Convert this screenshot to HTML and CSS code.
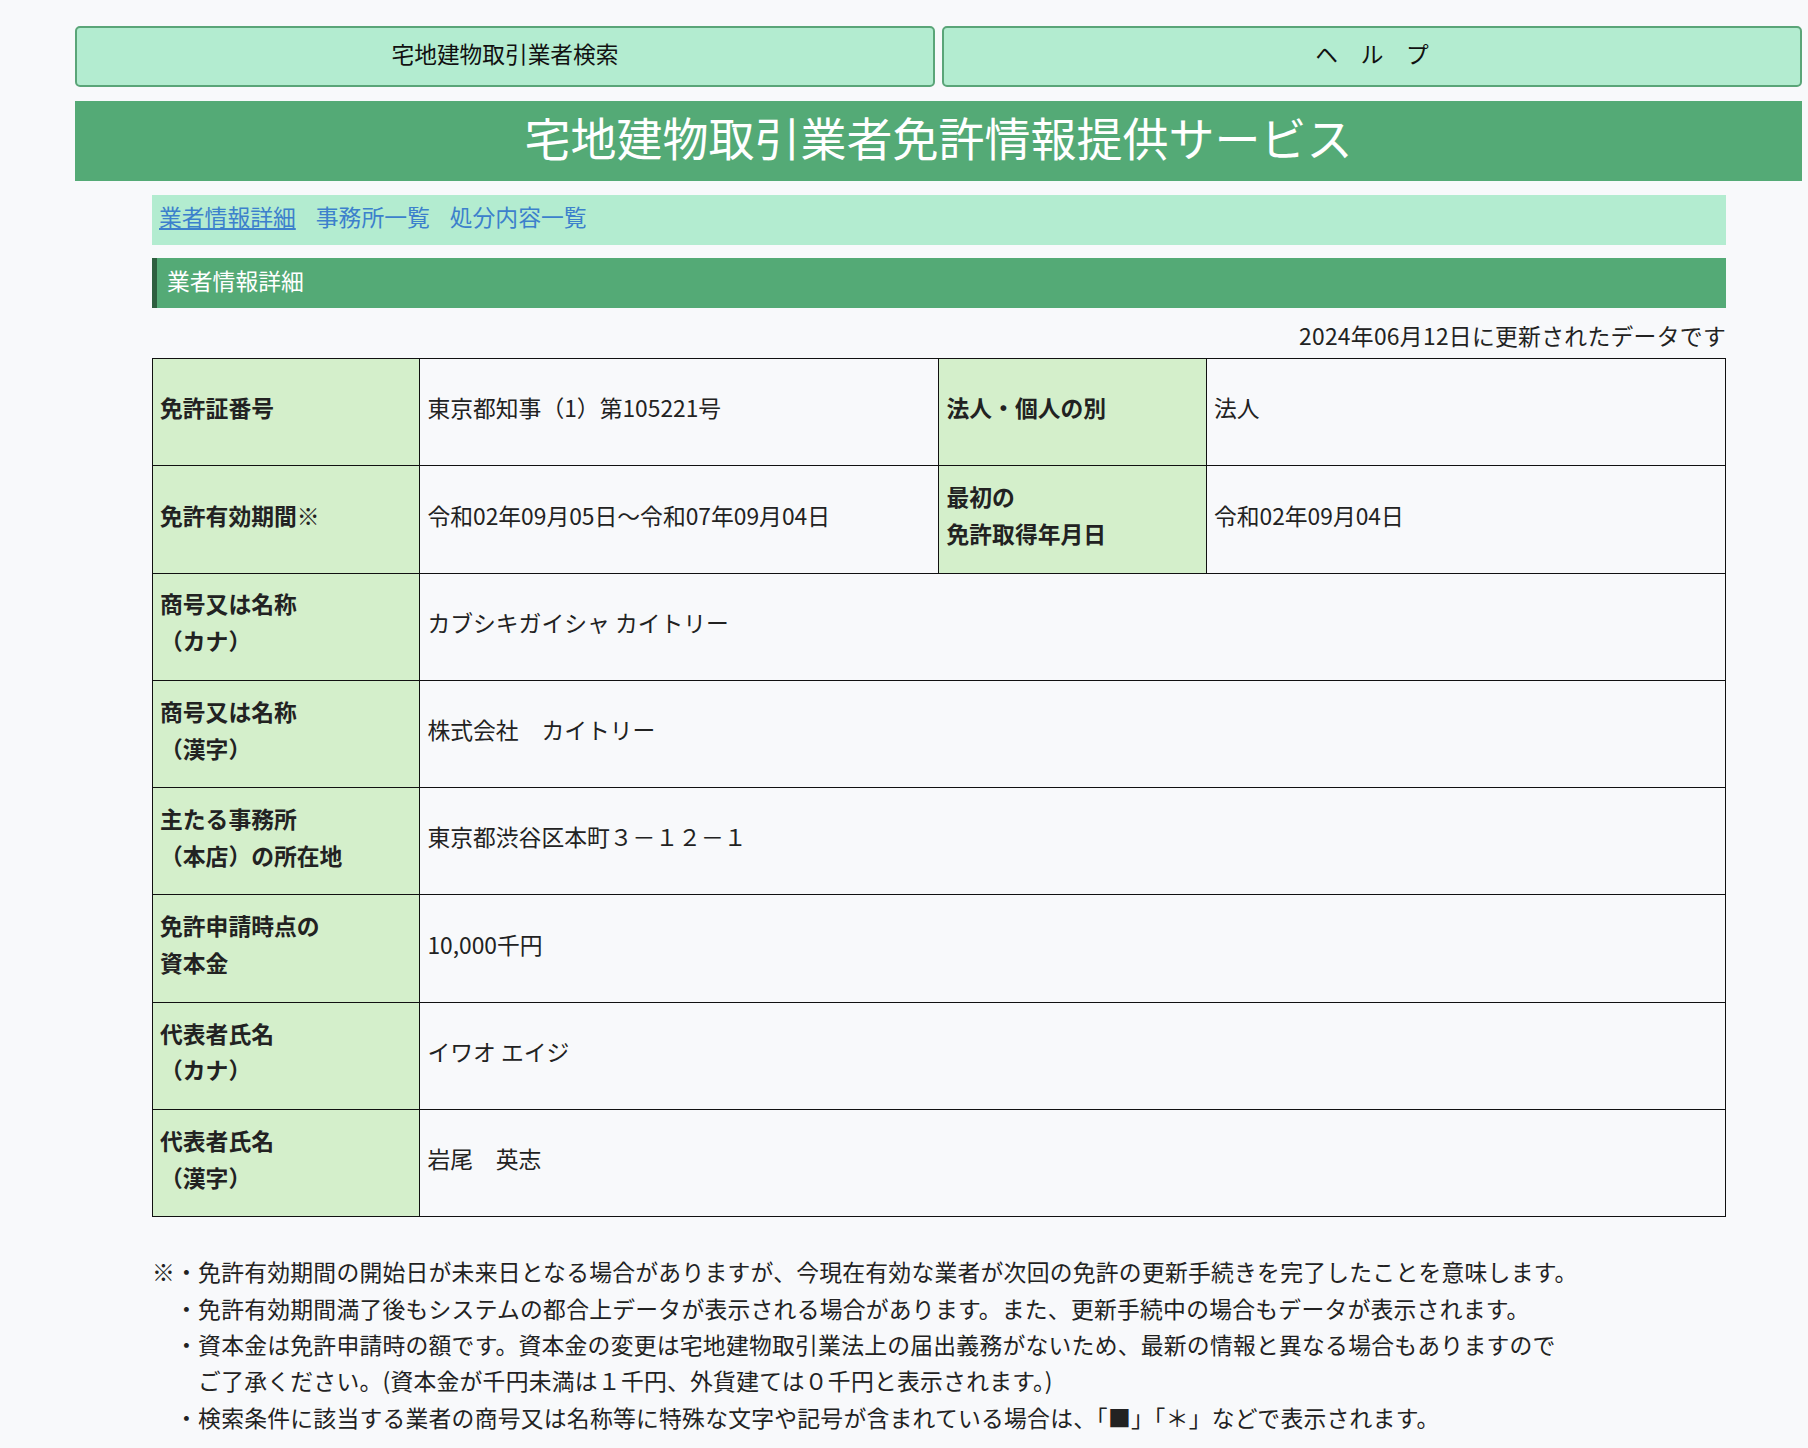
FILE: index.html
```html
<!DOCTYPE html>
<html lang="ja">
<head>
<meta charset="utf-8">
<title>宅地建物取引業者免許情報提供サービス</title>
<link rel="stylesheet" href="styles.css">
</head>
<body>
<div class="page">
  <nav class="topnav">
    <a class="btn" href="#">宅地建物取引業者検索</a>
    <a class="btn" href="#">ヘ　ル　プ</a>
  </nav>
  <h1 class="title">宅地建物取引業者免許情報提供サービス</h1>
  <main class="content">
    <div class="tabs"><a class="tab current" href="#">業者情報詳細</a><a class="tab" href="#">事務所一覧</a><a class="tab" href="#">処分内容一覧</a></div>
    <h2 class="section">業者情報詳細</h2>
    <p class="updated">2024年06月12日に更新されたデータです</p>
    <table class="detail">
      <colgroup><col class="c-label"><col class="c-value"><col class="c-label"><col class="c-value"></colgroup>
      <tr>
        <th>免許証番号</th><td>東京都知事（1）第105221号</td>
        <th>法人・個人の別</th><td>法人</td>
      </tr>
      <tr>
        <th>免許有効期間※</th><td>令和02年09月05日～令和07年09月04日</td>
        <th>最初の<br>免許取得年月日</th><td>令和02年09月04日</td>
      </tr>
      <tr>
        <th>商号又は名称<br>（カナ）</th><td colspan="3">カブシキガイシャ カイトリー</td>
      </tr>
      <tr>
        <th>商号又は名称<br>（漢字）</th><td colspan="3">株式会社　カイトリー</td>
      </tr>
      <tr>
        <th>主たる事務所<br>（本店）の所在地</th><td colspan="3">東京都渋谷区本町３－１２－１</td>
      </tr>
      <tr>
        <th>免許申請時点の<br>資本金</th><td colspan="3">10,000千円</td>
      </tr>
      <tr>
        <th>代表者氏名<br>（カナ）</th><td colspan="3">イワオ エイジ</td>
      </tr>
      <tr>
        <th>代表者氏名<br>（漢字）</th><td colspan="3">岩尾　英志</td>
      </tr>
    </table>
    <div class="notes">
      <p>※・免許有効期間の開始日が未来日となる場合がありますが、今現在有効な業者が次回の免許の更新手続きを完了したことを意味します。</p>
      <p>　・免許有効期間満了後もシステムの都合上データが表示される場合があります。また、更新手続中の場合もデータが表示されます。</p>
      <p>　・資本金は免許申請時の額です。資本金の変更は宅地建物取引業法上の届出義務がないため、最新の情報と異なる場合もありますので</p>
      <p>　　ご了承ください。(資本金が千円未満は１千円、外貨建ては０千円と表示されます。)</p>
      <p>　・検索条件に該当する業者の商号又は名称等に特殊な文字や記号が含まれている場合は、「■」「＊」などで表示されます。</p>
    </div>
  </main>
</div>
</body>
</html>
```

FILE: styles.css
```css
html, body {
  margin: 0;
  padding: 0;
  background: #f8f9fb;
}

body {
  font-family: "Noto Sans CJK JP", "Noto Sans", sans-serif;
  font-size: 22.8px;
  color: #222;
}

.page {
  width: 1727px;
  margin-left: 75px;
  padding-top: 26px;
}

.topnav {
  display: grid;
  grid-template-columns: 1fr 1fr;
  gap: 7px;
}

.btn {
  display: flex;
  align-items: center;
  justify-content: center;
  box-sizing: border-box;
  height: 61px;
  padding-bottom: 7px;
  background: #b3ecd0;
  border: 2px solid #5aa578;
  border-radius: 5px;
  color: #111;
  text-decoration: none;
  font-size: 22.7px;
}

.title {
  margin: 14px 0 0;
  box-sizing: border-box;
  height: 80px;
  line-height: 71px;
  padding-bottom: 9px;
  background: #54aa76;
  color: #fff;
  font-size: 46px;
  font-weight: normal;
  text-align: center;
}

.content {
  margin: 0 76px 0 77px;
}

.tabs {
  display: flex;
  gap: 20px;
  margin-top: 14px;
  box-sizing: border-box;
  height: 50px;
  line-height: 43px;
  padding: 0 0 7px 7px;
  background: #b3ecd0;
}

.tab {
  color: #3c80cc;
  text-decoration: none;
}

.tab.current {
  text-decoration: underline;
}

.section {
  margin: 13px 0 0;
  box-sizing: border-box;
  height: 50px;
  line-height: 45px;
  padding: 0 0 5px 10px;
  border-left: 5px solid #2e5f3f;
  background: #54aa76;
  color: #fff;
  font-size: 22.8px;
  font-weight: normal;
}

.updated {
  margin: 8px 0 2px;
  line-height: 40px;
  text-align: right;
  letter-spacing: 0.3px;
}

.detail {
  width: 100%;
  border-collapse: collapse;
  table-layout: fixed;
}

.c-label {
  width: 17%;
}

.c-value {
  width: 33%;
}

.detail th,
.detail td {
  border: 1px solid #111;
  height: 99.3px;
  padding: 0 7px 7px;
  line-height: 36.8px;
  text-align: left;
  vertical-align: middle;
}

.detail th {
  background: #d4efcb;
  font-weight: bold;
}

.detail td {
  background: #f8f9fb;
  font-weight: normal;
}

.notes {
  margin-top: 37px;
  line-height: 36.3px;
}

.notes p {
  margin: 0;
  white-space: pre;
  letter-spacing: 0.25px;
}
```
